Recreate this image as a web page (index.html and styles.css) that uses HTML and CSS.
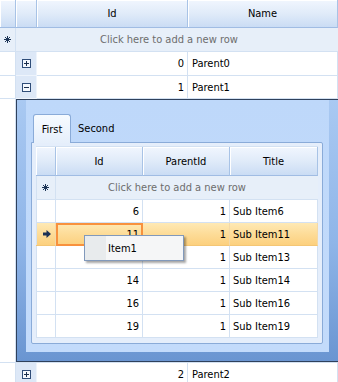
FILE: index.html
```html
<!DOCTYPE html>
<html>
<head>
<meta charset="utf-8">
<link rel="stylesheet" href="styles.css">
</head>
<body>
<div class="grid">
  <div class="row hdr">
    <div class="c"></div><div class="c"></div><div class="c">Id</div><div class="c">Name</div>
  </div>
  <div class="row newrow">
    <div class="c newtext">Click here to add a new row</div>
    <div class="c star"><svg width="7" height="7" viewBox="0 0 7 7"><path d="M3.5 0v7M0 3.5h7M1 1l5 5M6 1l-5 5" stroke="#1d3557" stroke-width="1" fill="none"/></svg></div>
  </div>
  <div class="row data">
    <div class="c"></div>
    <div class="c ex"><svg width="9" height="9" viewBox="0 0 9 9"><rect x="0.5" y="0.5" width="8" height="8" fill="#f4f8fd" stroke="#2f4d78"/><path d="M2 4.5h5M4.5 2v5" stroke="#1b2f4e"/></svg></div>
    <div class="c num">0</div><div class="c txt">Parent0</div>
  </div>
  <div class="row data p1">
    <div class="c"></div>
    <div class="c ex"><svg width="9" height="9" viewBox="0 0 9 9"><rect x="0.5" y="0.5" width="8" height="8" fill="#f4f8fd" stroke="#2f4d78"/><path d="M2 4.5h5" stroke="#1b2f4e"/></svg></div>
    <div class="c num">1</div><div class="c txt">Parent1</div>
  </div>
  <div class="row detailrow">
    <div class="c"></div>
    <div class="detailcell">
      <div class="detail">
        <div class="detail-inner">
          <div class="tabs">
            <div class="tab active">First</div>
            <div class="tab">Second</div>
          </div>
          <div class="panel">
            <div class="sub">
              <div class="srow shdr"><div class="c rh"></div><div class="c">Id</div><div class="c">ParentId</div><div class="c">Title</div></div>
              <div class="srow newrow">
                <div class="c newtext">Click here to add a new row</div>
                <div class="c rh star"><svg width="7" height="7" viewBox="0 0 7 7"><path d="M3.5 0v7M0 3.5h7M1 1l5 5M6 1l-5 5" stroke="#1d3557" stroke-width="1" fill="none"/></svg></div>
              </div>
              <div class="srow"><div class="c rh"></div><div class="c num">6</div><div class="c num">1</div><div class="c txt">Sub Item6</div></div>
              <div class="srow sel"><div class="c rh arrow"><svg width="8" height="8" viewBox="0 0 8 8"><path d="M0 2.5h3.5V0L8 4 3.5 8V5.5H0z" fill="#1c3154"/></svg></div><div class="c num cur">11</div><div class="c num">1</div><div class="c txt">Sub Item11</div></div>
              <div class="srow"><div class="c rh"></div><div class="c num">13</div><div class="c num">1</div><div class="c txt">Sub Item13</div></div>
              <div class="srow"><div class="c rh"></div><div class="c num">14</div><div class="c num">1</div><div class="c txt">Sub Item14</div></div>
              <div class="srow"><div class="c rh"></div><div class="c num">16</div><div class="c num">1</div><div class="c txt">Sub Item16</div></div>
              <div class="srow"><div class="c rh"></div><div class="c num">19</div><div class="c num">1</div><div class="c txt">Sub Item19</div></div>
            </div>
          </div>
        </div>
      </div>
    </div>
  </div>
  <div class="row data">
    <div class="c"></div>
    <div class="c ex"><svg width="9" height="9" viewBox="0 0 9 9"><rect x="0.5" y="0.5" width="8" height="8" fill="#f4f8fd" stroke="#2f4d78"/><path d="M2 4.5h5M4.5 2v5" stroke="#1b2f4e"/></svg></div>
    <div class="c num">2</div><div class="c txt">Parent2</div>
  </div>
</div>
<div class="menu">Item1</div>
</body>
</html>
```
FILE: styles.css
```css
html, body {
  margin: 0;
  padding: 0;
}
body {
  width: 338px;
  height: 382px;
  overflow: hidden;
  position: relative;
  background: #ffffff;
  font-family: "DejaVu Sans Condensed", "DejaVu Sans", sans-serif;
  font-size: 11px;
  color: #000;
}
.grid {
  width: 338px;
}
.row {
  display: grid;
  grid-template-columns: 16px 21px 151px 150px;
}
.srow {
  display: grid;
  grid-template-columns: 20px 87px 87px 88px;
  height: 23px;
}
.c {
  box-sizing: border-box;
  border-right: 1px solid #d3e1f2;
  border-bottom: 1px solid #d3e1f2;
  display: flex;
  align-items: center;
  white-space: nowrap;
  overflow: hidden;
}
.hdr {
  height: 28px;
}
.hdr .c, .shdr .c {
  justify-content: center;
  background: linear-gradient(to bottom, #f1f6fe 0%, #e0ebf9 50%, #cadcf4 100%);
  border-right-color: #a8c3e6;
  border-bottom-color: #a0bce3;
  box-shadow: inset 1px 1px 0 #ffffff;
}
.newrow {
  height: 24px;
}
.newrow .c {
  background: #e7eff9;
}
.newrow .newtext {
  grid-row: 1;
  grid-column: 1 / -1;
  justify-content: center;
  color: #6d6d6d;
  border-right: 0;
}
.newrow .star {
  grid-row: 1;
  grid-column: 1;
  justify-content: center;
  background: transparent;
  border-bottom: 0;
  height: 23px;
}
.data {
  height: 24px;
}
.p1 {
  height: 23px;
}
.ex {
  justify-content: center;
  background: #dde8f7;
  border-right-color: #eef4fc;
  border-bottom-color: #eef4fc;
}
.num {
  justify-content: flex-end;
  padding-right: 3px;
}
.txt {
  padding-left: 3px;
}
.data .txt {
  padding-left: 4px;
}
.detailrow {
  height: 264px;
}
.detailcell {
  grid-column: 2 / span 3;
  border-bottom: 1px solid #d3e1f2;
}
.detail {
  box-sizing: border-box;
  height: 263px;
  border: 1px solid #2f415c;
  border-right: 0;
  padding: 0 9px 9px 9px;
  background: linear-gradient(to bottom, #a9c9f2 0%, #8fb5e8 55%, #6a95d1 100%);
}
.detail-inner {
  box-sizing: border-box;
  height: 252px;
  padding: 14px 6px 8px 5px;
  background: linear-gradient(to bottom, #bed8fa 0%, #c3dbfb 100%);
  display: flex;
  flex-direction: column;
}
.tabs {
  display: flex;
  height: 28px;
  position: relative;
  z-index: 1;
}
.tab {
  box-sizing: border-box;
  height: 28px;
  display: flex;
  align-items: center;
  padding: 0 7px;
  color: #000;
}
.tab.active {
  margin-left: 2px;
  width: 38px;
  height: 29px;
  justify-content: center;
  border: 1px solid #8aabd8;
  border-bottom: 0;
  border-radius: 3px 3px 0 0;
  background: linear-gradient(to bottom, #f7fbff 0%, #e6effb 100%);
}
.panel {
  box-sizing: border-box;
  height: 202px;
  border: 1px solid #8aabd8;
  border-radius: 0 2px 2px 2px;
  background: #e5eefb;
  padding: 3px 4px 5px 4px;
}
.sub {
  border-top: 1px solid #d3e1f2;
  background: #ffffff;
}
.shdr {
  height: 29px;
}
.sub .newrow {
  height: 24px;
}
.sub .newrow .star {
  height: 23px;
}
.rh {
  box-shadow: inset 1px 0 0 #d3e1f2;
  justify-content: center;
}
.sel .c {
  background: linear-gradient(to bottom, #fee9b5 0%, #fddc98 50%, #fcd07e 100%);
  border-bottom-color: #f4c675;
  border-right-color: #f3d9a8;
}
.sel .arrow {
  justify-content: flex-start;
  padding-left: 7px;
}
.cur {
  outline: 2px solid #f8913d;
  outline-offset: -2px;
}
.menu {
  position: absolute;
  left: 84px;
  top: 235px;
  width: 100px;
  height: 26px;
  box-sizing: border-box;
  border: 1px solid #8199bb;
  background: linear-gradient(to right, #e8ebed 0, #e8ebed 21px, #f5f6f7 21px);
  box-shadow: 2px 2px 2px rgba(0, 0, 0, 0.35);
  padding-left: 23px;
  display: flex;
  align-items: center;
}
```
